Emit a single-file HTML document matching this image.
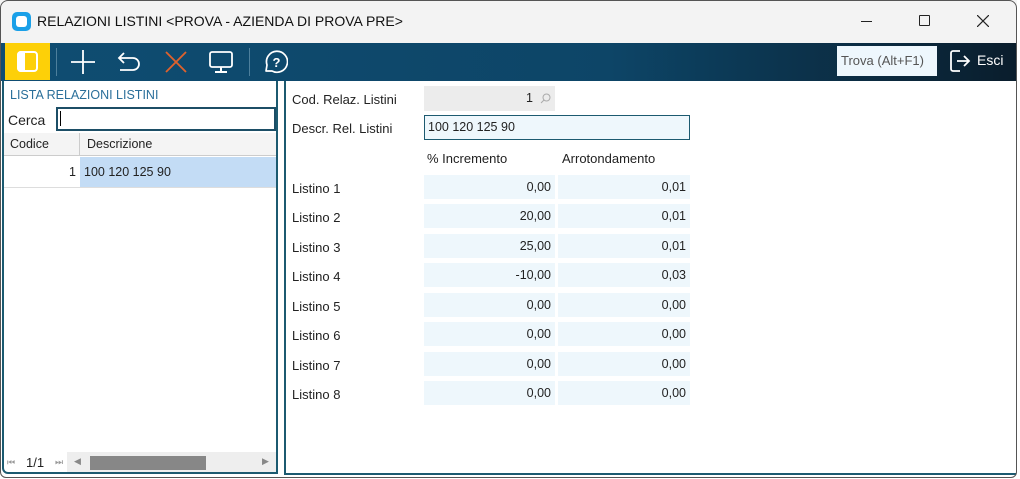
<!DOCTYPE html>
<html><head><meta charset="utf-8"><style>
*{margin:0;padding:0;box-sizing:border-box}
body{width:1020px;height:479px;overflow:hidden;background:#fff;font-family:"Liberation Sans",sans-serif;font-size:12.5px;color:#222;position:relative}
.a{position:absolute}
.title{left:0;top:0;width:1017px;height:43px;background:#f3f3f3}
.tb{left:0;top:43px;width:1017px;height:38px;background:linear-gradient(90deg,#0f4d72 0%,#0d4567 60%,#0a1d2c 100%)}
.lbl{font-size:13px;color:#222}
.cell{background:#eef7fc;height:24px;text-align:right;padding-right:4px;line-height:24px;font-size:12.5px}
</style></head><body>
<div class="a title"></div>
<div class="a" style="left:12px;top:12px;width:19px;height:19px;border-radius:5px;background:#1aa0e8"><div class="a" style="left:4px;top:4px;width:11px;height:11px;border-radius:3px;background:#fff"></div></div>
<div class="a" style="left:37px;top:13px;font-size:14px;color:#111">RELAZIONI LISTINI &lt;PROVA - AZIENDA DI PROVA PRE&gt;</div>
<div class="a" style="left:861px;top:21px;width:11px;height:1px;background:#222"></div>
<div class="a" style="left:919px;top:15px;width:11px;height:11px;border:1px solid #222;border-radius:1px"></div>
<svg class="a" style="left:977px;top:15px" width="12" height="12"><path d="M0 0L12 12M12 0L0 12" stroke="#222" stroke-width="1.2"/></svg>
<div class="a tb"></div>
<div class="a" style="left:5px;top:43px;width:45px;height:37px;background:#fdd008"></div>
<div class="a" style="left:17px;top:51px;width:21px;height:21px;border:2px solid #fff;border-radius:4px"></div>
<div class="a" style="left:17px;top:51px;width:8px;height:21px;background:#fff;border-radius:4px 0 0 4px"></div>
<div class="a" style="left:56px;top:48px;width:1px;height:28px;background:#4d7f9c"></div>
<svg class="a" style="left:70px;top:49px" width="26" height="26"><path d="M13 1V25M1 13H25" stroke="#fff" stroke-width="1.8"/></svg>
<svg class="a" style="left:116px;top:49px" width="26" height="26"><path d="M8 4L3 9L8 14M3 9H17A6 6 0 0 1 17 21H4" stroke="#fff" stroke-width="1.8" fill="none"/></svg>
<svg class="a" style="left:164px;top:50px" width="24" height="24"><path d="M2 2L22 22M22 2L2 22" stroke="#e0622c" stroke-width="1.8"/></svg>
<svg class="a" style="left:208px;top:49px" width="26" height="26"><rect x="2" y="3" width="22" height="15" rx="2" stroke="#fff" stroke-width="1.8" fill="none"/><path d="M13 18V22M7 23H19" stroke="#fff" stroke-width="2"/></svg>
<div class="a" style="left:249px;top:48px;width:1px;height:28px;background:#4d7f9c"></div>
<svg class="a" style="left:262px;top:49px" width="26" height="26"><path d="M4 22L5 16A10.5 10.5 0 1 1 10 22Z" stroke="#fff" stroke-width="1.7" fill="none" stroke-linejoin="round"/><text x="14.5" y="18" font-size="13" font-weight="bold" fill="#fff" text-anchor="middle" font-family="Liberation Sans">?</text></svg>
<div class="a" style="left:837px;top:46px;width:100px;height:30px;background:#eef7fd;color:#555;font-size:13px;line-height:30px;padding-left:4px">Trova (Alt+F1)</div>
<svg class="a" style="left:949px;top:49px" width="24" height="24"><path d="M11 2H4A2 2 0 0 0 2 4V20A2 2 0 0 0 4 22H11M8 12H20M15 7L20 12L15 17" stroke="#fff" stroke-width="1.8" fill="none"/></svg>
<div class="a" style="left:977px;top:52px;color:#fff;font-size:14px">Esci</div>
<!-- left panel -->
<div class="a" style="left:2px;top:81px;width:276px;height:393px;border:2px solid #1c5a70;border-top:none;border-radius:0 0 0 6px"></div>
<div class="a" style="left:10px;top:88px;color:#2a6f9a;font-size:12.5px">LISTA RELAZIONI LISTINI</div>
<div class="a" style="left:8px;top:112px;font-size:14px">Cerca</div>
<div class="a" style="left:56px;top:107px;width:220px;height:24px;border:2px solid #1c4e66"></div>
<div class="a" style="left:60px;top:111px;width:1px;height:15px;background:#000"></div>
<div class="a" style="left:4px;top:133px;width:272px;height:23px;background:#f4f4f4;border-bottom:1px solid #ccc"></div>
<div class="a" style="left:79px;top:133px;width:1px;height:23px;background:#ccc"></div>
<div class="a" style="left:10px;top:137px">Codice</div>
<div class="a" style="left:87px;top:137px">Descrizione</div>
<div class="a" style="left:80px;top:157px;width:196px;height:30px;background:#c3dcf5"></div>
<div class="a" style="left:4px;top:187px;width:272px;height:1px;background:#ddd"></div>
<div class="a" style="left:69px;top:165px">1</div>
<div class="a" style="left:84px;top:165px">100 120 125 90</div>
<div class="a" style="left:67px;top:452px;width:209px;height:20px;background:#eee"></div>
<div class="a" style="left:90px;top:456px;width:116px;height:14px;background:#878787"></div>
<div class="a" style="left:7px;top:457px;color:#999;font-size:9px">⏮</div>
<div class="a" style="left:26px;top:455px;font-size:13px">1/1</div>
<div class="a" style="left:55px;top:457px;color:#999;font-size:9px">⏭</div>
<div class="a" style="left:74px;top:456px;color:#888;font-size:9px">◀</div>
<div class="a" style="left:262px;top:456px;color:#888;font-size:9px">▶</div>
<!-- right panel -->
<div class="a" style="left:284px;top:81px;width:732px;height:394px;border:2px solid #1c5a70;border-top:none;border-right:none"></div>
<div class="a lbl" style="left:292px;top:92px">Cod. Relaz. Listini</div>
<div class="a" style="left:424px;top:86px;width:131px;height:25px;background:#ececec;text-align:right;padding-right:22px;line-height:25px">1</div>
<svg class="a" style="left:540px;top:93px" width="11" height="11"><circle cx="6.5" cy="4.5" r="3.5" stroke="#aaa" fill="none"/><path d="M4 7L1 10" stroke="#aaa"/></svg>
<div class="a lbl" style="left:292px;top:121px">Descr. Rel. Listini</div>
<div class="a" style="left:424px;top:115px;width:266px;height:25px;border:1px solid #1c5a70;background:#eef7fc;padding-left:3px;line-height:23px">100 120 125 90</div>
<div class="a lbl" style="left:427px;top:151px">% Incremento</div>
<div class="a lbl" style="left:562px;top:151px">Arrotondamento</div>
<div class="a lbl" style="left:292px;top:181px">Listino 1</div><div class="a cell" style="left:424px;top:175px;width:131px">0,00</div><div class="a cell" style="left:558px;top:175px;width:132px">0,01</div>
<div class="a lbl" style="left:292px;top:210px">Listino 2</div><div class="a cell" style="left:424px;top:204px;width:131px">20,00</div><div class="a cell" style="left:558px;top:204px;width:132px">0,01</div>
<div class="a lbl" style="left:292px;top:240px">Listino 3</div><div class="a cell" style="left:424px;top:234px;width:131px">25,00</div><div class="a cell" style="left:558px;top:234px;width:132px">0,01</div>
<div class="a lbl" style="left:292px;top:269px">Listino 4</div><div class="a cell" style="left:424px;top:263px;width:131px">-10,00</div><div class="a cell" style="left:558px;top:263px;width:132px">0,03</div>
<div class="a lbl" style="left:292px;top:299px">Listino 5</div><div class="a cell" style="left:424px;top:293px;width:131px">0,00</div><div class="a cell" style="left:558px;top:293px;width:132px">0,00</div>
<div class="a lbl" style="left:292px;top:328px">Listino 6</div><div class="a cell" style="left:424px;top:322px;width:131px">0,00</div><div class="a cell" style="left:558px;top:322px;width:132px">0,00</div>
<div class="a lbl" style="left:292px;top:358px">Listino 7</div><div class="a cell" style="left:424px;top:352px;width:131px">0,00</div><div class="a cell" style="left:558px;top:352px;width:132px">0,00</div>
<div class="a lbl" style="left:292px;top:387px">Listino 8</div><div class="a cell" style="left:424px;top:381px;width:131px">0,00</div><div class="a cell" style="left:558px;top:381px;width:132px">0,00</div>
<div class="a" style="left:0;top:0;width:1017px;height:478px;border:1px solid #555;border-radius:8px 8px 6px 6px;pointer-events:none"></div>
</body></html>
